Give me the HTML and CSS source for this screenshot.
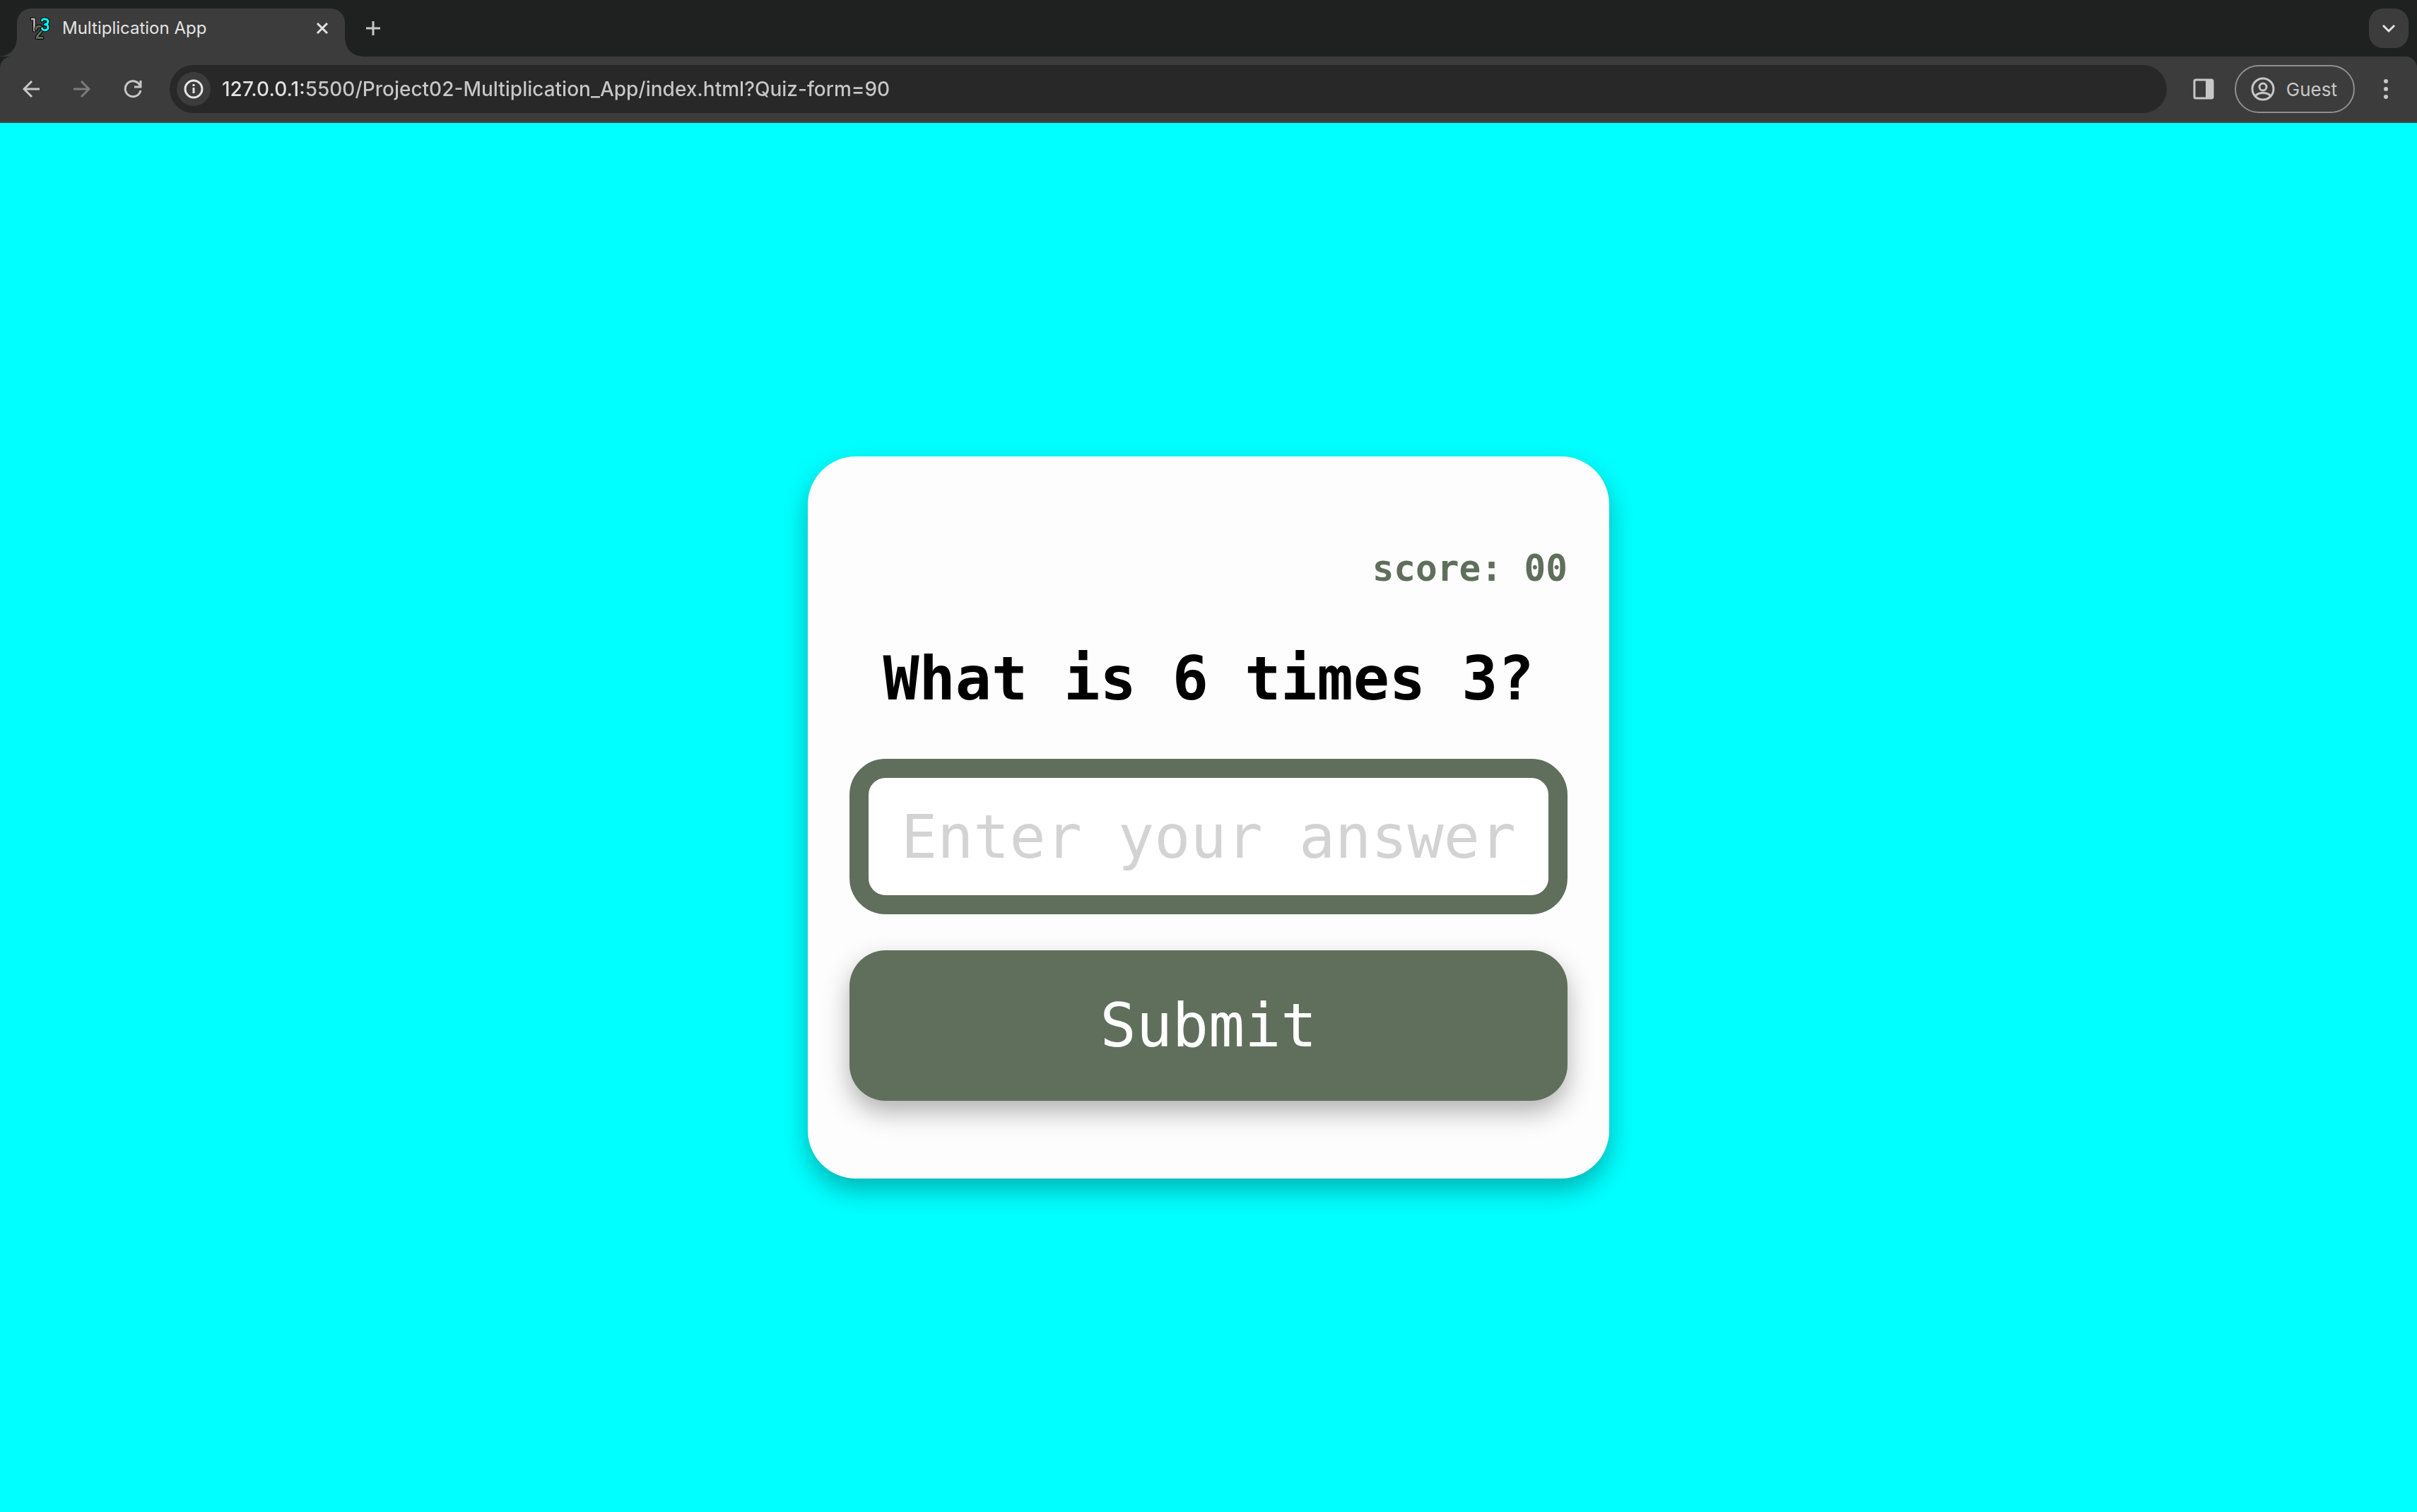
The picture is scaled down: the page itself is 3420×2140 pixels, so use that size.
FILE: index.html
```html
<!DOCTYPE html>
<html lang="en">
<head>
<meta charset="utf-8">
<meta name="viewport" content="width=device-width, initial-scale=1">
<title>Multiplication App</title>
<link rel="stylesheet" href="styles.css">
</head>
<body>
<header class="browser">
  <div class="tab-strip">
    <div class="tab">
      <svg class="favicon" viewBox="0 0 32 32" width="32" height="32" aria-hidden="true">
        <g fill="none" stroke-linecap="round" stroke-linejoin="round">
          <path d="M5 3H8.500V19" stroke="#000" stroke-width="5"/>
          <path d="M5 3H8.500V19" stroke="#b5a6a6" stroke-width="3"/>
          <path d="M11 17C11 12 20 12 20 17C20 21 13 25 12 29.500H20" stroke="#000" stroke-width="5"/>
          <path d="M11 17C11 12 20 12 20 17C20 21 13 25 12 29.500H20" stroke="#5f6f5c" stroke-width="3"/>
          <path d="M19.500 5C20 2 28 2 28 6.500C28 9 26 10.500 23.500 10.500C26 10.500 28 12 28 14.500C28 20 20 20 19.500 16" stroke="#000" stroke-width="5"/>
          <path d="M19.500 5C20 2 28 2 28 6.500C28 9 26 10.500 23.500 10.500C26 10.500 28 12 28 14.500C28 20 20 20 19.500 16" stroke="#0ff" stroke-width="3"/>
        </g>
      </svg>
      <span class="tab-title">Multiplication App</span>
      <button class="icon-button tab-close" type="button" aria-label="Close tab">
        <svg viewBox="0 0 20 20" width="20" height="20"><path d="M3 3L17 17M17 3L3 17" stroke="#e3e3e3" stroke-width="3"/></svg>
      </button>
    </div>
    <button class="icon-button new-tab" type="button" aria-label="New tab">
      <svg viewBox="0 0 20 20" width="20" height="20"><path d="M10 0V20M0 10H20" stroke="#c7c7c7" stroke-width="3"/></svg>
    </button>
    <button class="icon-button tab-search" type="button" aria-label="Search tabs">
      <svg viewBox="0 0 20 20" width="20" height="20"><path d="M2 6L10 14L18 6" fill="none" stroke="#e3e3e3" stroke-width="3"/></svg>
    </button>
  </div>
  <div class="toolbar">
    <nav class="history" aria-label="History">
      <button class="icon-button" type="button" aria-label="Back">
        <svg viewBox="0 0 24 24" width="24" height="24"><path d="M24 12H2M13 1L2 12L13 23" fill="none" stroke="#c7c7c7" stroke-width="3"/></svg>
      </button>
      <button class="icon-button" type="button" aria-label="Forward" disabled>
        <svg viewBox="0 0 24 24" width="24" height="24"><path d="M0 12H22M11 1L22 12L11 23" fill="none" stroke="#7c7c7c" stroke-width="3"/></svg>
      </button>
      <button class="icon-button" type="button" aria-label="Reload">
        <svg viewBox="0 0 26 26" width="26" height="26"><path d="M24 15A11 11 0 1 1 21 5L24 9M24 1V10H15" fill="none" stroke="#c7c7c7" stroke-width="3"/></svg>
      </button>
    </nav>
    <div class="omnibox">
      <button class="icon-button site-info" type="button" aria-label="View site information">
        <svg viewBox="0 0 28 28" width="28" height="28"><circle cx="14" cy="14" r="12" fill="none" stroke="#e3e3e3" stroke-width="3"/><path d="M14 12V20M14 7V10" stroke="#e3e3e3" stroke-width="3"/></svg>
      </button>
      <input class="address" type="text" aria-label="Address" value="127.0.0.1:5500/Project02-Multiplication_App/index.html?Quiz-form=90">
    </div>
    <button class="icon-button side-panel" type="button" aria-label="Side panel">
      <svg viewBox="0 0 30 30" width="30" height="30"><rect x="2" y="2" width="26" height="26" rx="2" fill="none" stroke="#c7c7c7" stroke-width="3"/><path d="M18 2H28V28H18Z" fill="#c7c7c7"/></svg>
    </button>
    <button class="profile" type="button">
      <svg viewBox="0 0 34 34" width="34" height="34" aria-hidden="true"><g fill="none" stroke="#c7c7c7" stroke-width="3"><circle cx="17" cy="17" r="15"/><circle cx="17" cy="14" r="5"/><path d="M6 27C11 21 23 21 28 27"/></g></svg>
      <span>Guest</span>
    </button>
    <button class="icon-button menu" type="button" aria-label="Menu">
      <svg viewBox="0 0 8 30" width="8" height="30"><g fill="#c7c7c7"><circle cx="4" cy="4" r="3"/><circle cx="4" cy="15" r="3"/><circle cx="4" cy="26" r="3"/></g></svg>
    </button>
  </div>
</header>
<main class="page">
  <form class="quiz">
    <h4 class="score">score: 00</h4>
    <h1 class="question"><label for="answer">What is 6 times 3?</label></h1>
    <input class="answer" id="answer" name="Quiz-form" type="text" placeholder="Enter your answer" autocomplete="off">
    <button class="submit" type="submit">Submit</button>
  </form>
</main>
</body>
</html>
```
FILE: styles.css
```css
:root {
  --strip: #1f2120;
  --toolbar: #3c3c3c;
  --omnibox: #282828;
  --icon: #c7c7c7;
  --bright: #e3e3e3;
  --green: #5f6f5c;
  --lift: 0 16px 36px rgba(0, 0, 0, .3);
}

* {
  box-sizing: border-box;
}

body {
  margin: 0;
  min-height: 100vh;
  display: flex;
  flex-direction: column;
  background: #0ff;
  font-family: Inter, "Liberation Sans", sans-serif;
}

button,
input {
  font: inherit;
}

svg {
  display: block;
}

.browser {
  background: var(--strip);
}

.icon-button {
  display: grid;
  place-items: center;
  flex: none;
  padding: 0;
  border: 0;
  background: none;
}

/* Tab strip */

.tab-strip {
  display: flex;
  align-items: center;
  height: 80px;
  padding: 0 12px 0 24px;
}

.tab {
  position: relative;
  align-self: flex-end;
  display: flex;
  align-items: center;
  width: 464px;
  height: 68px;
  padding: 0 20px 12px 16px;
  border-radius: 20px 20px 0 0;
  background: var(--toolbar);
}

.tab::before,
.tab::after {
  content: "";
  position: absolute;
  bottom: 0;
  width: 24px;
  height: 24px;
}

.tab::before {
  right: 100%;
  background: radial-gradient(circle at 0 0, transparent 23px, var(--toolbar) 24px);
}

.tab::after {
  left: 100%;
  background: radial-gradient(circle at 100% 0, transparent 23px, var(--toolbar) 24px);
}

.tab-title {
  flex: 1;
  padding-left: 16px;
  color: var(--bright);
  font-size: 24px;
  line-height: 32px;
}

.tab-close {
  width: 24px;
  height: 32px;
}

.new-tab {
  width: 56px;
  height: 56px;
  margin-left: 12px;
}

.tab-search {
  width: 56px;
  height: 56px;
  margin-left: auto;
  border-radius: 20px;
  background: var(--toolbar);
}

/* Toolbar */

.toolbar {
  display: flex;
  align-items: center;
  height: 94px;
  padding: 0 16px;
  border-bottom: 2px solid #474747;
  border-radius: 16px 16px 0 0;
  background: var(--toolbar);
}

.history {
  display: flex;
  gap: 16px;
}

.history .icon-button {
  width: 56px;
  height: 56px;
}

.omnibox {
  flex: 1;
  display: flex;
  align-items: center;
  height: 68px;
  margin-left: 24px;
  padding: 0 10px;
  border-radius: 34px;
  background: var(--omnibox);
}

.site-info {
  width: 48px;
  height: 48px;
  border-radius: 50%;
  background: var(--toolbar);
}

/* The host is drawn brighter than the rest of the address. */
.address {
  flex: 1;
  min-width: 0;
  height: 40px;
  margin-left: 16px;
  padding: 0;
  border: 0;
  outline: 0;
  color: var(--icon);
  background: linear-gradient(to right, var(--bright) 120px, var(--icon) 120px) text;
  -webkit-text-fill-color: transparent;
  font-size: 28px;
  font-weight: 500;
  line-height: 40px;
}

.side-panel {
  width: 56px;
  height: 56px;
  margin-left: 24px;
}

.profile {
  display: flex;
  align-items: center;
  gap: 16px;
  height: 68px;
  margin-left: 16px;
  padding: 0 23px 0 21px;
  border: 2px solid #8f8f8f;
  border-radius: 34px;
  background: none;
  color: var(--icon);
  font-size: 26px;
}

.menu {
  width: 56px;
  height: 56px;
  margin-left: 16px;
}

/* Quiz */

.page {
  flex: 1;
  display: flex;
  align-items: center;
  justify-content: center;
}

.quiz {
  display: flex;
  flex-direction: column;
  width: 100%;
  max-width: 1134px;
  padding: 129px 59px 110px;
  border-radius: 68px;
  background: #fdfdfd;
  box-shadow: var(--lift);
  font-family: "DejaVu Sans Mono", monospace;
  font-size: 85px;
  line-height: 100px;
}

.score {
  margin: 0 0 76px;
  color: var(--green);
  font-size: 51px;
  line-height: 60px;
  text-align: right;
}

.question {
  margin: 0 0 63px;
  color: #000;
  font-size: 85px;
  text-align: center;
}

.answer {
  width: 100%;
  height: 220px;
  margin-bottom: 51px;
  padding: 0 27px;
  border: 27px solid var(--green);
  border-radius: 51px;
  outline: 0;
  background: #fff;
  color: #000;
  text-align: center;
}

.answer::placeholder {
  color: #d3d3d3;
  opacity: 1;
}

.submit {
  height: 213px;
  border: 0;
  border-radius: 51px;
  background: var(--green);
  box-shadow: var(--lift);
  color: #fff;
}
```
